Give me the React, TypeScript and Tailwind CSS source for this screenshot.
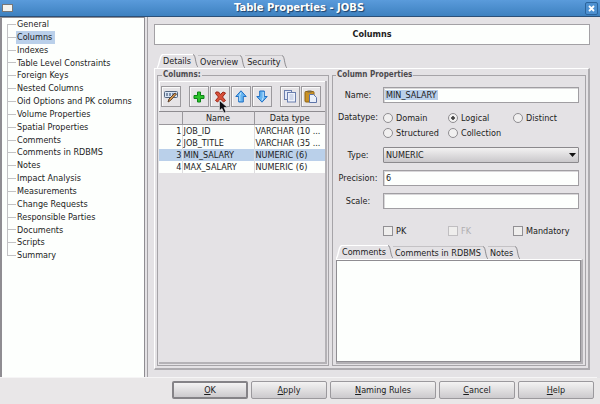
import type { ReactNode } from "react";

const sections = [
  "General", "Columns", "Indexes", "Table Level Constraints", "Foreign Keys", "Nested Columns",
  "Oid Options and PK columns", "Volume Properties", "Spatial Properties", "Comments",
  "Comments in RDBMS", "Notes", "Impact Analysis", "Measurements", "Change Requests",
  "Responsible Parties", "Documents", "Scripts", "Summary",
];

const columns = [
  { name: "JOB_ID", type: "VARCHAR (10 ..." },
  { name: "JOB_TITLE", type: "VARCHAR (35 ..." },
  { name: "MIN_SALARY", type: "NUMERIC (6)" },
  { name: "MAX_SALARY", type: "NUMERIC (6)" },
];

function Tabs({ label, names }: { label: string; names: string[] }) {
  return (
    <div role="tablist" aria-label={label} className="flex h-[14px] items-end">
      <svg width="6" height="14" viewBox="0 0 6 14" className="shrink-0" aria-hidden="true">
        <path d="M0 14C3 11 2 1 6 .5" fill="none" stroke="#fff" strokeWidth="1.4" />
      </svg>
      {names.map((name, i) => (
        <div key={name} className={i === 0 ? "flex h-[14px]" : "flex h-[13px]"}>
          <button
            role="tab"
            aria-selected={i === 0}
            className={
              i === 0
                ? "border-t border-white pr-[2px] leading-[13px] whitespace-nowrap"
                : "border-t border-[#c4c2c5] px-[2px] leading-[12px] whitespace-nowrap"
            }
          >
            {name}
          </button>
          <svg width="5" height="13" viewBox="0 0 5 13" className="shrink-0" aria-hidden="true">
            <path d="M0 .5C3 1 2 10 5 13" fill="none" stroke="#8e8c90" />
          </svg>
        </div>
      ))}
    </div>
  );
}

function Tool({ label, children }: { label: string; children: ReactNode }) {
  return (
    <button
      aria-label={label}
      className="relative flex h-[21px] w-[20px] items-center justify-center border border-[#9b999d] bg-[#e6e4e7] shadow-[inset_1px_1px_0_#fafafa]"
    >
      {children}
    </button>
  );
}

function Arrow({ down = false }: { down?: boolean }) {
  return (
    <svg width="12" height="13" viewBox="0 0 12 13" className={down ? "rotate-180" : ""} aria-hidden="true">
      <path d="M6 .8 11.2 6.5H8.3V12H3.7V6.5H.8Z" fill="#67b5f0" stroke="#1f6fc4" strokeLinejoin="round" />
      <path d="M6 2.5 4.8 5.5V11" fill="none" stroke="#c5e8ff" />
    </svg>
  );
}

function Label({ htmlFor, children }: { htmlFor: string; children: ReactNode }) {
  return (
    <label htmlFor={htmlFor} className="text-center whitespace-nowrap">
      {children}
    </label>
  );
}

function Radio({ name, checked = false }: { name: string; checked?: boolean }) {
  return (
    <label className="flex h-[15px] items-center gap-[3px] whitespace-nowrap">
      <input
        type="radio"
        name="datatype"
        defaultChecked={checked}
        className="size-[10px] shrink-0 appearance-none rounded-full border border-[#8f8d91] bg-[#f1f0f0] checked:bg-[radial-gradient(circle,#444_0_1.5px,#f1f0f0_2px)]"
      />
      {name}
    </label>
  );
}

function Check({ name, disabled = false }: { name: string; disabled?: boolean }) {
  return (
    <label className={disabled ? "flex items-center gap-[3px] text-[#b0aeb1]" : "flex items-center gap-[3px]"}>
      <input
        type="checkbox"
        disabled={disabled}
        className="size-[10px] shrink-0 appearance-none border border-[#929094] bg-[#efeeed] disabled:border-[#c0bec1]"
      />
      {name}
    </label>
  );
}

const field =
  "h-[16px] w-full min-w-0 border border-[#a09ea2] bg-[#fdfffd] px-[2px] outline-none shadow-[inset_1px_1px_0_#d8d7d9]";

const legend = "ml-[3px] px-[1px] text-[8px] leading-[12px] font-bold text-[#4c4a4e]";

export default function App() {
  return (
    <div className="flex min-h-screen flex-col bg-[#e4e2e5] font-['DejaVu_Sans_Condensed','DejaVu_Sans',sans-serif] text-[9px] leading-[12px] text-[#1c1c1c]">
      <header className="flex h-[17px] items-center border-b border-[#2b5078] bg-linear-to-b from-[#5a9bdb] to-[#3d81c0] px-[2px]">
        <button aria-label="Window menu" className="h-[8px] w-[11px] border border-[#777] bg-[#f4f3ee]" />
        <h1 className="flex-1 text-center font-['DejaVu_Sans',sans-serif] text-[10px] leading-[14px] font-bold text-white [text-shadow:1px_1px_1px_#1d3f66]">
          Table Properties - JOBS
        </h1>
        <button
          aria-label="Close"
          className="flex size-[13px] items-center justify-center rounded-[2px] border border-[#2c649c] bg-[#4d90d0]"
        >
          <svg width="7" height="7" viewBox="0 0 7 7" aria-hidden="true">
            <path d="M1 1 6 6M6 1 1 6" stroke="#fff" strokeWidth="1.8" />
          </svg>
        </button>
      </header>

      <div className="mr-[3px] flex flex-1 border-b border-[#f6f5f6]">
        <nav
          aria-label="Sections"
          className="w-[145px] shrink-0 border-t border-r border-l-2 border-[#8f8d92] bg-[#fdfffd]"
        >
          <ul className="flex h-[244px] flex-col pl-[5px]">
            {sections.map((s, i) => (
              <li key={s} className="flex min-h-0 flex-1">
                <span
                  className={
                    i === 0
                      ? "mt-[6px] w-[9px] border-t border-l border-[#c2c2c4]"
                      : i === sections.length - 1
                        ? "mb-[6px] w-[9px] border-b border-l border-[#c2c2c4]"
                        : "w-[9px] border-l border-[#c2c2c4] bg-[linear-gradient(#c2c2c4,#c2c2c4)] bg-[length:9px_1px] bg-center bg-no-repeat"
                  }
                />
                <a
                  href="#"
                  className={
                    i === 1
                      ? "bg-[#bad0ea] pr-[3px] pl-[1px] whitespace-nowrap"
                      : "pl-[1px] whitespace-nowrap"
                  }
                >
                  {s}
                </a>
              </li>
            ))}
          </ul>
        </nav>

        <main className="ml-[2px] flex min-w-0 flex-1 flex-col border-l border-[#a3a1a5] pt-[7px] pr-[7px] pb-[7px] pl-[6px]">
          <h2 className="h-[21px] border border-[#a3a1a5] bg-[#fdfffd] text-center text-[9px] leading-[19px] font-bold">
            Columns
          </h2>
          <div className="mt-[9px] pl-[3px]">
            <Tabs label="Views" names={["Details", "Overview", "Security"]} />
          </div>
          <div className="flex flex-1 gap-[3px] border-t border-r-2 border-b-2 border-l border-t-white border-r-[#aeacb0] border-b-[#aeacb0] border-l-white pr-[2px] pb-[2px] pl-[2px]">
            <fieldset className="flex w-[172px] shrink-0 flex-col border border-[#a6a4a8] px-[1px] pb-[1px]">
              <legend className={legend}>Columns:</legend>
              <div className="flex flex-1 flex-col border-r-2 border-b-2 border-[#b4b2b6]">
                <div className="flex gap-[8px] border-t border-l border-white py-[4px] pl-[1px]">
                  <Tool label="Column properties">
                    <svg width="15" height="13" viewBox="0 0 15 13" aria-hidden="true">
                      <rect x=".5" y="1.5" width="13" height="6" rx="1" fill="#d7e4f5" stroke="#53657e" />
                      <path d="M3 3v3M6 3v3M9 3v3" stroke="#263b5c" />
                      <path d="m12.5 4-6 6.5L4 12l1-3 6-6Z" fill="#d99a4e" stroke="#5d3f28" />
                    </svg>
                  </Tool>
                  <div className="flex gap-[1px]">
                    <Tool label="Add column">
                      <svg width="12" height="12" viewBox="0 0 12 12" aria-hidden="true">
                        <path d="M4.5 1h3v3.5H11v3H7.500V11h-3V7.500H1v-3h3.500Z" fill="#2cc32c" stroke="#0c8417" strokeLinejoin="round" />
                      </svg>
                    </Tool>
                    <Tool label="Remove column">
                      <svg width="13" height="12" viewBox="0 0 13 12" aria-hidden="true">
                        <path d="M2 1h2.500L6.500 3.500 9 1l2.500 1L8.500 6l3 3.500L9.500 11l-3-3L3.500 11l-2-1.500L4.500 6 1.500 2.500Z" fill="#d8503a" stroke="#9c2718" strokeLinejoin="round" />
                      </svg>
                      <svg width="9" height="14" viewBox="0 0 9 14" className="absolute top-[13px] left-[8px] z-10" aria-hidden="true">
                        <path d="M.5.5V10.500L3 8.500 5 13l2-1L5 7.500H8.500Z" fill="#0d0d14" stroke="#eee" strokeWidth=".6" />
                      </svg>
                    </Tool>
                    <Tool label="Move up"><Arrow /></Tool>
                    <Tool label="Move down"><Arrow down /></Tool>
                  </div>
                  <div className="flex gap-[1px]">
                    <Tool label="Copy">
                      <svg width="14" height="13" viewBox="0 0 14 13" aria-hidden="true">
                        <rect x="1.500" y=".5" width="7" height="9" fill="#e3e9f7" stroke="#6b7fae" />
                        <rect x="4.500" y="2.500" width="8" height="9.500" fill="#eef2fb" stroke="#6b7fae" />
                        <path d="M6.500 5h4M6.500 7h4M6.500 9h4" stroke="#b1bddb" />
                      </svg>
                    </Tool>
                    <Tool label="Paste">
                      <svg width="14" height="13" viewBox="0 0 14 13" aria-hidden="true">
                        <rect x="1" y="1.500" width="9" height="10.500" rx="1" fill="#c99125" stroke="#8f6414" />
                        <rect x="3.500" y=".5" width="4" height="2" fill="#7a6a4a" />
                        <path d="M5.500 4.500h4l3 3v5h-7Z" fill="#e9effa" stroke="#5d74a8" />
                      </svg>
                    </Tool>
                  </div>
                </div>
                <table className="w-full table-fixed border-collapse border-t border-[#8e8c90]">
                  <colgroup>
                    <col className="w-[23px]" />
                    <col className="w-[72px]" />
                    <col />
                  </colgroup>
                  <thead>
                    <tr className="h-[13px]">
                      <th aria-label="Number" className="border-r border-b border-[#9a989c]" />
                      <th className="border-r border-b border-[#9a989c] font-normal">Name</th>
                      <th className="border-b border-[#9a989c] font-normal">Data type</th>
                    </tr>
                  </thead>
                  <tbody>
                    {columns.map((c, i) => (
                      <tr key={c.name} className={i === 2 ? "h-[12px] bg-[#bad0ea]" : "h-[12px] bg-[#fdfffd]"}>
                        <td className="border-r border-[#dddcde] text-right">{i + 1}</td>
                        <td className="border-r border-[#dddcde] pl-[1px]">{c.name}</td>
                        <td className="pl-[1px] whitespace-nowrap">{c.type}</td>
                      </tr>
                    ))}
                  </tbody>
                </table>
              </div>
            </fieldset>

            <fieldset className="flex min-w-0 flex-1 flex-col border border-[#a6a4a8] pr-[2px] pb-[1px] pl-[3px]">
              <legend className="ml-0 px-[1px] text-[8px] leading-[12px] font-bold text-[#4c4a4e]">
                Column Properties
              </legend>
              <div className="grid grid-cols-[44px_1fr] items-center gap-x-[3px] gap-y-[7px] pt-[6px] pr-[4px]">
                <Label htmlFor="name">Name:</Label>
                <input
                  id="name"
                  defaultValue="MIN_SALARY"
                  className={`${field} bg-[linear-gradient(#bad0ea,#bad0ea)] bg-[length:53px_10px] bg-[position:1px_center] bg-no-repeat`}
                />
                <div id="datatype" className="self-start text-center leading-[15px]">Datatype:</div>
                <div role="radiogroup" aria-labelledby="datatype" className="grid grid-cols-[65px_65px_1fr]">
                  <Radio name="Domain" />
                  <Radio name="Logical" checked />
                  <Radio name="Distinct" />
                  <Radio name="Structured" />
                  <Radio name="Collection" />
                </div>
                <Label htmlFor="type">Type:</Label>
                <div className="relative">
                  <select
                    id="type"
                    className="block h-[16px] w-full appearance-none rounded-[1px] border border-[#8b898d] bg-linear-to-b from-[#f3f2f2] to-[#cac8cb] px-[2px]"
                  >
                    <option>NUMERIC</option>
                  </select>
                  <svg width="7" height="4" viewBox="0 0 7 4" className="pointer-events-none absolute top-[6px] right-[3px]" aria-hidden="true">
                    <path d="M0 0h7L3.500 4Z" fill="#111" />
                  </svg>
                </div>
                <Label htmlFor="precision">Precision:</Label>
                <input id="precision" defaultValue="6" className={field} />
                <Label htmlFor="scale">Scale:</Label>
                <input id="scale" className={field} />
                <div className="col-start-2 grid grid-cols-[65px_65px_1fr] pt-[9px]">
                  <Check name="PK" />
                  <Check name="FK" disabled />
                  <Check name="Mandatory" />
                </div>
              </div>
              <div className="mt-[8px]">
                <Tabs label="Notes" names={["Comments", "Comments in RDBMS", "Notes"]} />
              </div>
              <div className="flex flex-1 border-t border-r-2 border-b-2 border-t-white border-r-[#b4b2b6] border-b-[#b4b2b6]">
                <textarea
                  aria-label="Comments"
                  className="w-full resize-none border border-[#8f8d92] bg-[#fdfffd] p-[2px] outline-none"
                />
              </div>
            </fieldset>
          </div>
        </main>
      </div>

      <footer className="flex justify-end gap-[3px] bg-[#e9e7e8] px-[6px] pt-[3px] pb-[5px]">
        {["OK", "Apply", "Naming Rules", "Cancel", "Help"].map((b, i) => (
          <button
            key={b}
            className={
              (i === 2 ? "w-[106px] " : "w-[76px] ") +
              (i === 0 ? "border-2 border-[#858387] leading-[14px] " : "border border-[#9b999d] leading-[16px] ") +
              "h-[18px] rounded-[2px] bg-linear-to-b from-[#f4f3f3] to-[#cccacd]"
            }
          >
            <span className="underline">{b[0]}</span>
            {b.slice(1)}
          </button>
        ))}
      </footer>
    </div>
  );
}
